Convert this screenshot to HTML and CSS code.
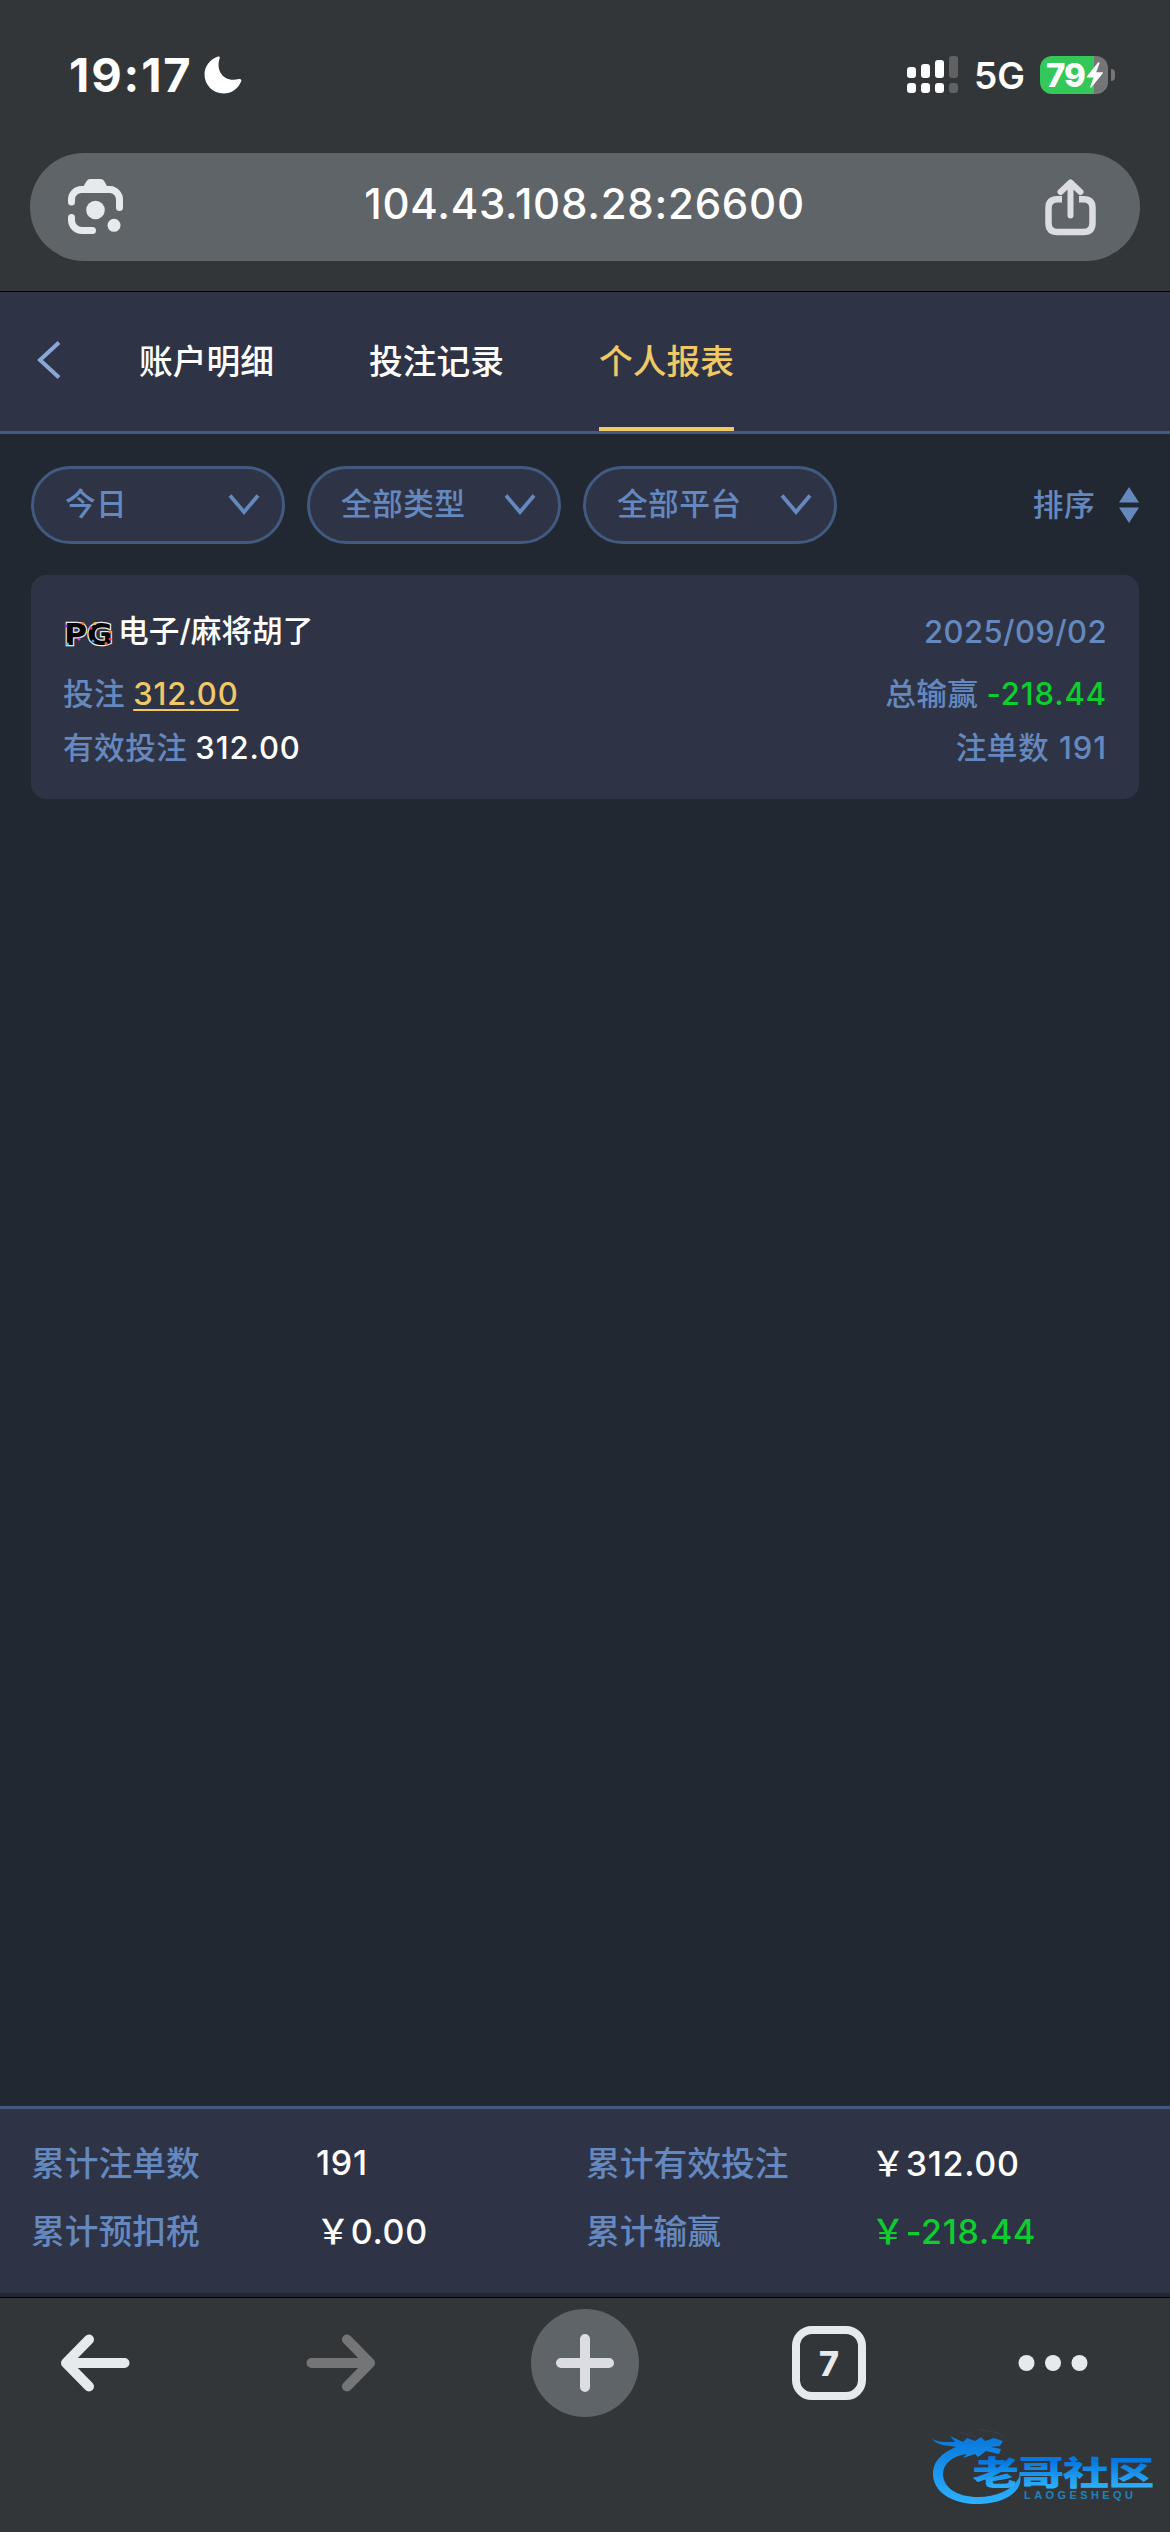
FILE: index.html
```html
<!DOCTYPE html>
<html lang="zh-CN">
<head>
<meta charset="utf-8">
<title>个人报表</title>
<link rel="stylesheet" href="styles.css">
</head>
<body>
<div class="status">
  <div class="status-left">
    <span class="time">19:17</span>
    <svg class="moon" width="38" height="38" viewBox="0 0 38 38"><path fill="#fff" d="M14 .6C15.500 0 16.200 1 15.600 2.500C11.500 15 20 27 35 23C36.800 22.600 37.800 23.600 37.200 25.200C34 33 27.500 37.400 19.500 37.400C9 37.400.5 29 .5 18.500C.5 10.500 6 3.400 14 .6Z"/></svg>
  </div>
  <div class="status-right">
    <svg class="signal" width="52" height="38" viewBox="0 0 52 38">
      <g fill="#fff"><rect x="0" y="11" width="9" height="11" rx="3"/><rect x="14" y="8" width="9" height="14" rx="3"/><rect x="28" y="4" width="9" height="18" rx="3"/><rect x="0" y="27" width="9" height="10" rx="3"/><rect x="14" y="27" width="9" height="10" rx="3"/><rect x="28" y="27" width="9" height="10" rx="3"/></g>
      <g fill="#5f6163"><rect x="42" y="0" width="9" height="22" rx="3"/><rect x="42" y="27" width="9" height="10" rx="3"/></g>
    </svg>
    <span class="net">5G</span>
    <div class="battery">
      <span class="level">79</span>
      <svg class="bolt" width="18" height="26" viewBox="0 0 18 26"><path fill="#fff" d="M12 .5L1 14.200C.4 15 .8 15.500 1.500 15.500H7.500L4.300 24.500C4 25.600 5 26 5.800 25L16.600 11.600C17.200 10.800 16.800 10.200 16 10.200H10.200L13.500 1.500C13.800.4 12.800-.3 12 .5Z"/></svg>
    </div>
    <span class="battery-cap"></span>
  </div>
</div>
<div class="address">
  <div class="omnibox">
    <svg width="56" height="56" viewBox="0 0 56 56">
      <g fill="none" stroke="#e6eaed" stroke-width="7" stroke-linecap="round"><path d="M3.500 23V20A10 10 0 0 1 13.500 10.500H42A10 10 0 0 1 51.500 20.500V28.500"/><path d="M3.500 38.500V41A10.500 10.500 0 0 0 14 51.500H24.500"/></g>
      <path fill="#e6eaed" d="M15 8L18.500 2.200Q19.800 0 22.500 0H32.500Q35 0 36.300 2.200L39.500 8Z"/><circle cx="27.500" cy="31" r="9.300" fill="#e6eaed"/><circle cx="46" cy="46.300" r="6.500" fill="#e6eaed"/>
    </svg>
    <span class="url">104.43.108.28:26600</span>
    <svg width="52" height="57" viewBox="0 0 52 57"><g fill="none" stroke="#dcdde2" stroke-linecap="round" stroke-linejoin="round"><path stroke-width="6" d="M25.500 36.500V4M15.500 13L25.500 3.500L35.500 13"/><path stroke-width="6.500" stroke-linecap="butt" d="M17 20.200H12.500Q3.500 20.200 3.500 29V44Q3.500 53 12.500 53H38.500Q47.500 53 47.500 44V29Q47.500 20.200 38.500 20.200H34"/></g></svg>
  </div>
</div>
<div class="page">
  <header class="tabs">
    <svg class="back" width="24" height="38" viewBox="0 0 24 38"><path d="M22 1.500L3 19L22 36.500" fill="none" stroke="#89a8d8" stroke-width="4"/></svg>
    <nav class="tab-list">
      <span class="tab">账户明细</span><span class="tab">投注记录</span><span class="tab active">个人报表</span>
    </nav>
  </header>
  <div class="filters">
    <div class="pill"><span>今日</span><svg width="32" height="21" viewBox="0 0 32 21"><path d="M2 1.500L16 18L30 1.500" fill="none" stroke="#6588bf" stroke-width="3.800"/></svg></div>
    <div class="pill"><span>全部类型</span><svg width="32" height="21" viewBox="0 0 32 21"><path d="M2 1.500L16 18L30 1.500" fill="none" stroke="#6588bf" stroke-width="3.800"/></svg></div>
    <div class="pill"><span>全部平台</span><svg width="32" height="21" viewBox="0 0 32 21"><path d="M2 1.500L16 18L30 1.500" fill="none" stroke="#6588bf" stroke-width="3.800"/></svg></div>
    <div class="sort"><span>排序</span><svg width="20" height="36" viewBox="0 0 20 36"><path fill="#6588bf" d="M10 0L20 15.500H0ZM0 20.500H20L10 36Z"/></svg></div>
  </div>
  <section class="card">
    <div class="row title-row">
      <div class="game">
        <svg class="pg" width="52" height="28" viewBox="0 0 52 28">
          <text class="pg-text" x="1" y="25" textLength="49" lengthAdjust="spacingAndGlyphs">PG</text>
          <g><circle cx="3" cy="6" r="1.500" fill="#7a2cff"/><circle cx="20" cy="3.500" r="1.500" fill="#ff7a1c"/><circle cx="16" cy="19" r="1.500" fill="#e53be0"/><circle cx="4.500" cy="24" r="1.500" fill="#35c9ff"/><circle cx="32" cy="3.500" r="1.500" fill="#ffc22b"/><circle cx="28" cy="8" r="1.500" fill="#ff2f7d"/><circle cx="30" cy="21" r="1.500" fill="#2893ff"/><circle cx="47" cy="12" r="1.500" fill="#ff7a1c"/><circle cx="47" cy="19" r="1.500" fill="#ff3030"/><circle cx="43" cy="23.500" r="1.500" fill="#ff5b1c"/></g>
        </svg>
        <span class="game-name">电子/麻将胡了</span>
      </div>
      <span class="date">2025/09/02</span>
    </div>
    <div class="row">
      <div class="pair"><span>投注</span><span class="num stake">312.00</span></div>
      <div class="pair"><span>总输赢</span><span class="num loss">-218.44</span></div>
    </div>
    <div class="row">
      <div class="pair"><span>有效投注</span><span class="num valid">312.00</span></div>
      <div class="pair count"><span>注单数</span><span class="num">191</span></div>
    </div>
  </section>
  <footer class="totals">
    <span class="label">累计注单数</span><span class="value">191</span>
    <span class="label">累计有效投注</span><span class="value"><span class="yen">￥</span>312.00</span>
    <span class="label">累计预扣税</span><span class="value"><span class="yen">￥</span>0.00</span>
    <span class="label">累计输赢</span><span class="value loss"><span class="yen">￥</span>-218.44</span>
  </footer>
</div>
<div class="toolbar">
  <div class="cell"><svg width="70" height="58" viewBox="0 0 70 58"><path d="M64.500 29H7M29 5.500L6 29L29 52.500" fill="none" stroke="#e6eaed" stroke-width="10" stroke-linecap="round" stroke-linejoin="round"/></svg></div>
  <div class="cell"><svg width="70" height="58" viewBox="0 0 70 58"><path d="M5.500 29H63M41 5.500L64 29L41 52.500" fill="none" stroke="#747577" stroke-width="10" stroke-linecap="round" stroke-linejoin="round"/></svg></div>
  <div class="cell"><div class="plus"><svg width="58" height="58" viewBox="0 0 58 58"><path d="M29 5V53M5 29H53" stroke="#dcdde2" stroke-width="10" stroke-linecap="round"/></svg></div></div>
  <div class="cell"><div class="tab-count">7</div></div>
  <div class="cell more"><svg width="70" height="18" viewBox="0 0 70 18"><g fill="#e6eaed"><circle cx="8.500" cy="9" r="8"/><circle cx="35" cy="9" r="8"/><circle cx="61.500" cy="9" r="8"/></g></svg></div>
</div>
<div class="brand">
  <svg width="230" height="80" viewBox="0 0 230 80">
    <defs>
      <linearGradient id="ring" x1="0" y1="10" x2="0" y2="78" gradientUnits="userSpaceOnUse"><stop offset="0" stop-color="#0878dc"/><stop offset="1" stop-color="#2fb2ff"/></linearGradient>
      <linearGradient id="word" x1="0" y1="-26" x2="0" y2="3" gradientUnits="userSpaceOnUse"><stop offset="0" stop-color="#0577df"/><stop offset="1" stop-color="#2cb0fb"/></linearGradient>
    </defs>
    <path fill="url(#ring)" d="M2 11C10 15 17 14 25 14L20 8L33 14L37 10L45 13L51 9L55 13L64 10L73 13L70 18L61 19L71 21L69 26L56 23L48 29L45 26L33 30L37 26C22 28 13 36 13 46C13 60 28 69 48 69C68 69 85 61 90 47C94 63 75 75 50 76C23 77 3 64 3 46C3 32 14 24 26 19C17 17 8 18 2 11Z"/>
    <path fill="none" stroke="#2d5f86" stroke-opacity=".3" stroke-width="1" d="M30 4L46 9M48 1C60 5 72 2 73 11"/>
    <text class="brand-word" fill="url(#word)" transform="translate(42.500 56.500) scale(1.290 .92)" textLength="141">老哥社区</text>
    <text class="brand-latin" x="94" y="71" textLength="109">LAOGESHEQU</text>
  </svg>
</div>
</body>
</html>
```
FILE: styles.css
```css
* { box-sizing: border-box; }
body {
  margin: 0;
  width: 1170px;
  height: 2532px;
  overflow: hidden;
  position: relative;
  display: flex;
  flex-direction: column;
  background: #333639;
  color: #fff;
  font-family: Inter, "Noto Sans CJK SC", sans-serif;
  font-weight: 500;
}
svg { display: block; flex: none; overflow: visible; }
span { white-space: nowrap; }

.status {
  height: 153px;
  padding: 0 55px 4px 69px;
  display: flex;
  justify-content: space-between;
  align-items: center;
}
.status-left, .status-right { display: flex; align-items: center; }
.time { width: 135px; font-size: 47px; font-weight: 700; line-height: 56px; letter-spacing: 1.900px; }
.net { width: 65px; margin-left: 15px; margin-right: 1px; font-size: 37px; font-weight: 600; line-height: 44px; padding-top: 3px; }
.battery {
  width: 68px;
  height: 38px;
  border-radius: 12px;
  background: linear-gradient(90deg, #34c759 54px, #747577 54px);
  display: flex;
  align-items: center;
  padding-left: 6px;
}
.level { width: 40px; font-size: 33px; font-weight: 800; line-height: 38px; letter-spacing: -1px; }
.battery-cap { width: 4px; height: 12px; margin-left: 3px; background: #747577; border-radius: 0 4px 4px 0; }

.address { height: 139px; padding: 0 30px; border-bottom: 1px solid #000; }
.omnibox {
  height: 108px;
  padding: 0 43px 0 38px;
  border-radius: 54px;
  background: #5f6468;
  display: flex;
  justify-content: space-between;
  align-items: center;
}
.url { font-size: 42px; line-height: 50px; padding-bottom: 7px; letter-spacing: .75px; }

.page { height: 2006px; background: #222831; display: flex; flex-direction: column; border-bottom: 1px solid #000; }
.tabs {
  height: 142px;
  padding-left: 37px;
  display: flex;
  align-items: stretch;
  background: #2e3446;
  border-bottom: 3px solid #425980;
}
.back { margin-top: 49px; }
.tab-list { display: flex; gap: 95px; margin-left: 78px; }
.tab {
  width: 135px;
  font-size: 33.750px;
  line-height: 50px;
  padding-top: 45px;
}
.tab.active { color: #f0c866; background: linear-gradient(#f0c866, #f0c866) bottom / 100% 4px no-repeat; }

.filters {
  height: 141px;
  padding: 32px 31px 31px;
  display: flex;
  gap: 22px;
  color: #6588bf;
  font-size: 30.700px;
  letter-spacing: .4px;
  line-height: 44px;
}
.pill {
  width: 254px;
  padding: 0 22px 2px 31px;
  border: 3px solid #425980;
  border-radius: 39px;
  background: #2e3446;
  display: flex;
  align-items: center;
  justify-content: space-between;
}
.sort { margin-left: auto; display: flex; align-items: center; gap: 24px; padding-bottom: 1px; }

.card {
  height: 224px;
  margin: 0 31px;
  padding: 32px 32px 0;
  border-radius: 15px;
  background: #2e3446;
  color: #6588bf;
  font-size: 30.700px;
  letter-spacing: .4px;
}
.row { display: flex; justify-content: space-between; line-height: 54px; height: 54px; }
.title-row { height: 60px; line-height: 48px; }
.game { display: flex; gap: 3px; color: #fff; letter-spacing: 0; }
.pg { margin-top: 13px; }
.pg-text { font: 900 31px "DejaVu Sans", sans-serif; letter-spacing: 0; fill: #050505; stroke: #e8e8ea; stroke-width: 2.500px; paint-order: stroke; }
.num { font-size: 31px; font-weight: 550; letter-spacing: .9px; }
.date { padding-top: 1px; font-size: 31px; letter-spacing: .4px; }
.pair { display: flex; gap: 8px; }
.count { gap: 10px; }
.stake { color: #f0c866; text-decoration: underline; text-decoration-thickness: 2px; text-underline-offset: 4px; }
.valid { color: #fff; }
.loss { color: #0cce2e; }

.totals {
  height: 187px;
  margin-top: auto;
  margin-bottom: 4px;
  padding: 20px 31px 0;
  display: grid;
  grid-template-columns: 285px 270px 285px 1fr;
  grid-template-rows: 68px 68px;
  align-items: center;
  background: #2e3446;
  border-top: 3px solid #425980;
  font-size: 33.750px;
  line-height: 50px;
}
.label { color: #6588bf; padding-top: 1px; }
.value { font-size: 34px; font-weight: 550; letter-spacing: .7px; }
.yen { font-family: "Noto Sans CJK SC", sans-serif; font-size: 34px; font-weight: 500; }

.toolbar { height: 130px; display: grid; grid-template-columns: 190px 302px 186px 302px 1fr; }
.cell { display: flex; justify-content: center; align-items: center; }
.more { padding-right: 45px; }
.plus { width: 108px; height: 108px; border-radius: 50%; background: #5f6468; display: flex; align-items: center; justify-content: center; }
.tab-count {
  width: 74px;
  height: 74px;
  border: 8px solid #e6eaed;
  border-radius: 20px;
  color: #e6eaed;
  font-size: 34px;
  font-weight: 800;
  line-height: 59px;
  text-align: center;
}
.brand { position: absolute; left: 930px; top: 2428px; }
.brand-word { font: 900 36px "Noto Sans CJK SC", sans-serif; }
.brand-latin { font: 700 11px "Liberation Sans", sans-serif; fill: #2183bd; }
```
